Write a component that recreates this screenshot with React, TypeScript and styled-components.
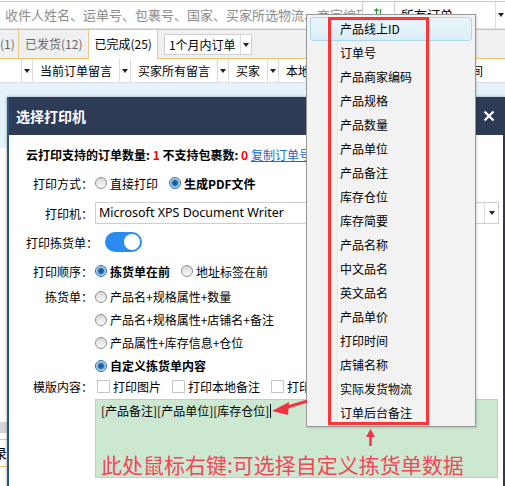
import React from "react";
import styled, { createGlobalStyle, css } from "styled-components";

const GlobalStyle = createGlobalStyle`
  html, body {
    margin: 0;
    padding: 0;
    background: #fff;
  }
  body {
    font-family: "Noto Sans CJK SC", "Noto Sans", sans-serif;
    font-size: 12px;
    color: #000;
  }
  * {
    box-sizing: border-box;
  }
`;

const Page = styled.div`
  position: relative;
  width: 505px;
  height: 486px;
  overflow: hidden;
  background: #fff;
`;

/* ---------- page behind the dialog ---------- */

const TopBar = styled.div`
  display: flex;
  height: 28px;
  margin-top: 1px;
  border-top: 1px solid #efc36c;
`;

const SearchBox = styled.div`
  width: 363px;
  padding-left: 5px;
  border-right: 1px solid #cfcfcf;
  border-bottom: 1px solid #e2e2e2;
  font-size: 13px;
  line-height: 26px;
  color: #8c8c8c;
  white-space: nowrap;
  overflow: hidden;
`;

const SortIcon = styled.div`
  width: 31px;
  display: flex;
  justify-content: center;
  padding-top: 6px;
`;

const FilterSelect = styled.div`
  flex: 1;
  display: flex;
  border-left: 1px solid #cfcfcf;
  border-bottom: 1px solid #e2e2e2;
`;

const FilterText = styled.div`
  flex: 1;
  padding-left: 6px;
  font-size: 13px;
  line-height: 26px;
  white-space: nowrap;
`;

const Caret = styled.span`
  width: 0;
  height: 0;
  border-left: 3.5px solid transparent;
  border-right: 3.5px solid transparent;
  border-top: 4px solid #222;
`;

const ArrowBox = styled.div<{ $w: number }>`
  width: ${({ $w }) => $w}px;
  display: flex;
  align-items: center;
  justify-content: center;
  border-left: 1px solid #dcdcdc;
  flex-shrink: 0;
`;

const TabBar = styled.div`
  display: flex;
  height: 30px;
  background: #f0f0f0;
  border-top: 1px solid #efc36c;
  border-bottom: 1px solid #efc36c;
`;

const Tab = styled.div<{ $active?: boolean; $first?: boolean }>`
  padding: 0 6px;
  font-size: 12px;
  line-height: 28px;
  color: #666;
  border-right: 1px solid #e9c98a;
  white-space: nowrap;
  ${({ $first }) =>
    $first &&
    css`
      padding-left: 0;
      width: 19px;
    `}
  ${({ $active }) =>
    $active &&
    css`
      color: #000;
      background: #fff;
      height: 29px;
      padding: 0 5px;
    `}
`;

const RangeSelect = styled.div`
  display: flex;
  width: 88px;
  height: 21px;
  margin: 4px 0 0 6px;
  background: #fff;
  border: 1px solid #cfcfcf;
`;

const RangeText = styled.div`
  flex: 1;
  padding-left: 4px;
  font-size: 12px;
  line-height: 19px;
  white-space: nowrap;
`;

const ColumnBar = styled.div`
  display: flex;
  height: 24px;
  background: #fff;
  border-bottom: 1px solid #dcdcdc;
`;

const ColumnSpacer = styled.div`
  width: 21px;
`;

const ColumnArrow = styled.div`
  width: 12px;
  display: flex;
  align-items: center;
  justify-content: center;
  border-left: 1px solid #dcdcdc;
  border-right: 1px solid #dcdcdc;
`;

const ColumnText = styled.div<{ $grow?: boolean }>`
  padding: 0 7px;
  line-height: 23px;
  white-space: nowrap;
  ${({ $grow }) =>
    $grow &&
    css`
      flex: 1;
      text-align: right;
      padding-right: 22px;
    `}
`;

const BlueBand = styled.div`
  height: 65px;
  background: #e4f3fb;
`;

const BackContent = styled.div`
  padding-top: 274px;
`;

const GrayRow = styled.div`
  height: 11px;
  background: #d6d6d6;
  margin-bottom: 6px;
`;

const DataRow = styled.div`
  height: 28px;
  border-top: 1px solid #efc36c;
  border-bottom: 1px solid #efc36c;
  font-size: 13px;
  line-height: 26px;
  margin-left: -6px;
`;

/* ---------- dialog ---------- */

const Dialog = styled.div`
  position: absolute;
  left: 7px;
  top: 97px;
  width: 498px;
  height: 410px;
  background: #fff;
  border-left: 2px solid #2b5586;
  border-right: 2px solid #2d3b57;
  box-shadow: 0 0 3px rgba(0, 0, 0, 0.35);
  z-index: 2;
`;

const DialogHeader = styled.div`
  height: 38px;
  display: flex;
  align-items: center;
  justify-content: space-between;
  padding: 0 8px 0 7px;
  background: #2d3b57;
`;

const DialogTitle = styled.div`
  color: #fff;
  font-size: 14px;
  font-weight: bold;
`;

const DialogBody = styled.div`
  padding: 10px 4px 0 17px;
`;

const InfoLine = styled.div`
  height: 20px;
  line-height: 20px;
  font-weight: bold;
  white-space: nowrap;
`;

const Count = styled.span`
  color: #f00;
`;

const CopyLink = styled.a`
  color: #1d6bc6;
  font-weight: normal;
  text-decoration: underline;
`;

const FormRow = styled.div<{ $h: number; $mt: number; $top?: boolean }>`
  display: flex;
  align-items: ${({ $top }) => ($top ? "flex-start" : "center")};
  height: ${({ $h }) => $h}px;
  margin-top: ${({ $mt }) => $mt}px;
`;

const Label = styled.div<{ $lh?: number }>`
  width: 67px;
  flex-shrink: 0;
  text-align: right;
  white-space: nowrap;
  ${({ $lh }) => $lh && `line-height: ${$lh}px;`}
`;

const Value = styled.div<{ $indent?: number; $column?: boolean }>`
  flex: 1;
  display: flex;
  flex-direction: ${({ $column }) => ($column ? "column" : "row")};
  align-items: ${({ $column }) => ($column ? "stretch" : "center")};
  margin-left: ${({ $indent }) => 2 + ($indent || 0)}px;
  white-space: nowrap;
`;

const Option = styled.label<{ $bold?: boolean; $h?: number }>`
  display: inline-flex;
  align-items: center;
  margin-right: 11px;
  font-weight: ${({ $bold }) => ($bold ? "bold" : "normal")};
  ${({ $h }) => $h && `height: ${$h}px;`}
`;

const Radio = styled.span<{ $checked?: boolean }>`
  width: 12px;
  height: 12px;
  margin-right: 3px;
  border-radius: 50%;
  border: 1px solid #8e8f8f;
  background: linear-gradient(#d6d6d6, #fdfdfd);
  ${({ $checked }) =>
    $checked &&
    css`
      border-color: #2f6a9c;
      background: radial-gradient(
        circle,
        #16477e 0,
        #2c6eae 2.5px,
        #6eb0e2 3.5px,
        #d5eaf8 5px
      );
    `}
`;

const Checkbox = styled.span`
  width: 13px;
  height: 13px;
  margin-right: 3px;
  border: 1px solid #c6c6c6;
  background: #fff;
`;

const SelectBox = styled.div`
  flex: 1;
  height: 22px;
  display: flex;
  border: 1px solid #cfcfcf;
`;

const SelectText = styled.div`
  flex: 1;
  padding-left: 3px;
  font-family: "Noto Sans", sans-serif;
  font-size: 12.5px;
  line-height: 20px;
`;

const Toggle = styled.span`
  position: relative;
  width: 37px;
  height: 20px;
  margin-left: 10px;
  border-radius: 10px;
  background: #2a8cf0;
  &::after {
    content: "";
    position: absolute;
    right: 2px;
    top: 2px;
    width: 16px;
    height: 16px;
    border-radius: 50%;
    background: #fff;
  }
`;

const TemplateBox = styled.div`
  height: 79px;
  margin: 4px 1px 0 69px;
  padding: 3px 5px 1px 5px;
  display: flex;
  flex-direction: column;
  justify-content: space-between;
  background: #cde8d1;
  border: 1px solid #bfcfc1;
`;

const TemplateText = styled.div`
  line-height: 16px;
  white-space: nowrap;
`;

const TextCaret = styled.span`
  display: inline-block;
  width: 1px;
  height: 14px;
  margin-left: 1px;
  vertical-align: -2px;
  background: #000;
`;

const Hint = styled.div`
  font-size: 21px;
  line-height: 24px;
  color: #f2475a;
  white-space: nowrap;
`;

/* ---------- context menu ---------- */

const Menu = styled.ul`
  position: absolute;
  left: 306px;
  top: 14px;
  width: 170px;
  margin: 0;
  padding: 2px 3px 1px 3px;
  list-style: none;
  border: 1px solid #979797;
  background: linear-gradient(
    to right,
    #f2f2f2 30px,
    #e3e3e3 30px,
    #e3e3e3 31px,
    #fff 31px,
    #fff 32px,
    #f2f2f2 32px
  );
  box-shadow: 1px 1px 2px rgba(0, 0, 0, 0.15);
  z-index: 3;
`;

const MenuItem = styled.li<{ $hover?: boolean }>`
  height: 24px;
  line-height: 22px;
  padding-left: 29px;
  border: 1px solid transparent;
  border-radius: 3px;
  white-space: nowrap;
  ${({ $hover }) =>
    $hover &&
    css`
      background: linear-gradient(#eaf5fb, #dcedf7);
      border-color: #a9daf0;
    `}
`;

const RedFrame = styled.div`
  position: absolute;
  left: 328px;
  top: 17px;
  width: 101px;
  height: 408px;
  border: 3px solid #ff3535;
  z-index: 4;
`;

const Marks = styled.svg`
  position: absolute;
  left: 0;
  top: 0;
  z-index: 4;
  pointer-events: none;
`;

const menuItems = [
  "产品线上ID",
  "订单号",
  "产品商家编码",
  "产品规格",
  "产品数量",
  "产品单位",
  "产品备注",
  "库存仓位",
  "库存简要",
  "产品名称",
  "中文品名",
  "英文品名",
  "产品单价",
  "打印时间",
  "店铺名称",
  "实际发货物流",
  "订单后台备注",
];

const pickOptions = [
  "产品名+规格属性+数量",
  "产品名+规格属性+店铺名+备注",
  "产品属性+库存信息+仓位",
];

const columns = ["当前订单留言", "买家所有留言", "买家", "本地备注"];

const App = () => {
  return (
    <Page>
      <GlobalStyle />

      <TopBar>
        <SearchBox>收件人姓名、运单号、包裹号、国家、买家所选物流、商家编码</SearchBox>
        <SortIcon>
          <svg width="9" height="11" viewBox="0 0 9 11">
            <path d="M2.5 1 L2.5 10 M0.5 3 L2.5 1 L4.5 3" stroke="#3a9c3a" strokeWidth="1.3" fill="none" />
            <path d="M6.5 1 L6.5 10 M4.5 8 L6.5 10 L8.5 8" stroke="#3a9c3a" strokeWidth="1.3" fill="none" />
          </svg>
        </SortIcon>
        <FilterSelect>
          <FilterText>所有订单</FilterText>
          <ArrowBox $w={10}>
            <Caret />
          </ArrowBox>
        </FilterSelect>
      </TopBar>

      <TabBar>
        <Tab $first>(1)</Tab>
        <Tab>已发货(12)</Tab>
        <Tab $active>已完成(25)</Tab>
        <RangeSelect>
          <RangeText>1个月内订单</RangeText>
          <ArrowBox $w={11}>
            <Caret />
          </ArrowBox>
        </RangeSelect>
      </TabBar>

      <ColumnBar>
        <ColumnSpacer />
        {columns.map((c) => (
          <React.Fragment key={c}>
            <ColumnArrow>
              <Caret />
            </ColumnArrow>
            <ColumnText>{c}</ColumnText>
          </React.Fragment>
        ))}
        <ColumnArrow>
          <Caret />
        </ColumnArrow>
        <ColumnText $grow>发货时间</ColumnText>
      </ColumnBar>

      <BlueBand />
      <BackContent>
        <GrayRow />
        <DataRow>录</DataRow>
      </BackContent>

      <Dialog>
        <DialogHeader>
          <DialogTitle>选择打印机</DialogTitle>
          <svg width="12" height="12" viewBox="0 0 12 12">
            <path d="M1.5 1.5 L10.5 10.5 M10.5 1.5 L1.5 10.5" stroke="#fff" strokeWidth="2.2" />
          </svg>
        </DialogHeader>
        <DialogBody>
          <InfoLine>
            云打印支持的订单数量: <Count>1</Count> 不支持包裹数: <Count>0</Count>{" "}
            <CopyLink>复制订单号</CopyLink>
          </InfoLine>

          <FormRow $h={22} $mt={7}>
            <Label>打印方式：</Label>
            <Value>
              <Option>
                <Radio />
                直接打印
              </Option>
              <Option $bold>
                <Radio $checked />
                生成PDF文件
              </Option>
            </Value>
          </FormRow>

          <FormRow $h={22} $mt={8}>
            <Label>打印机：</Label>
            <Value>
              <SelectBox>
                <SelectText>Microsoft XPS Document Writer</SelectText>
                <ArrowBox $w={14}>
                  <Caret />
                </ArrowBox>
              </SelectBox>
            </Value>
          </FormRow>

          <FormRow $h={22} $mt={7}>
            <Label>打印拣货单：</Label>
            <Value>
              <Toggle />
            </Value>
          </FormRow>

          <FormRow $h={22} $mt={7}>
            <Label>打印顺序：</Label>
            <Value>
              <Option $bold>
                <Radio $checked />
                拣货单在前
              </Option>
              <Option>
                <Radio />
                地址标签在前
              </Option>
            </Value>
          </FormRow>

          <FormRow $h={92} $mt={3} $top>
            <Label $lh={23}>拣货单：</Label>
            <Value $column>
              {pickOptions.map((o) => (
                <Option key={o} $h={23}>
                  <Radio />
                  {o}
                </Option>
              ))}
              <Option $h={23} $bold>
                <Radio $checked />
                自定义拣货单内容
              </Option>
            </Value>
          </FormRow>

          <FormRow $h={18} $mt={0}>
            <Label>模版内容：</Label>
            <Value $indent={2}>
              <Option>
                <Checkbox />
                打印图片
              </Option>
              <Option>
                <Checkbox />
                打印本地备注
              </Option>
              <Option>
                <Checkbox />
                打印产品图片
              </Option>
            </Value>
          </FormRow>

          <TemplateBox>
            <TemplateText>
              [产品备注][产品单位][库存仓位]
              <TextCaret />
            </TemplateText>
            <Hint>此处鼠标右键:可选择自定义拣货单数据</Hint>
          </TemplateBox>
        </DialogBody>
      </Dialog>

      <Menu>
        {menuItems.map((item, index) => (
          <MenuItem key={item} $hover={index === 0}>
            {item}
          </MenuItem>
        ))}
      </Menu>

      <RedFrame />

      <Marks width="505" height="486" viewBox="0 0 505 486">
        <path d="M286 407.5 L306 401.5" stroke="#ef3340" strokeWidth="3" strokeLinecap="round" />
        <polygon points="272,411 289,402 288,415" fill="#ef3340" />
        <polygon points="370.5,429 366,437 375,437" fill="#ef3340" />
        <path d="M370.5 436 L370.5 446" stroke="#ef3340" strokeWidth="2.4" />
      </Marks>
    </Page>
  );
};

export default App;
